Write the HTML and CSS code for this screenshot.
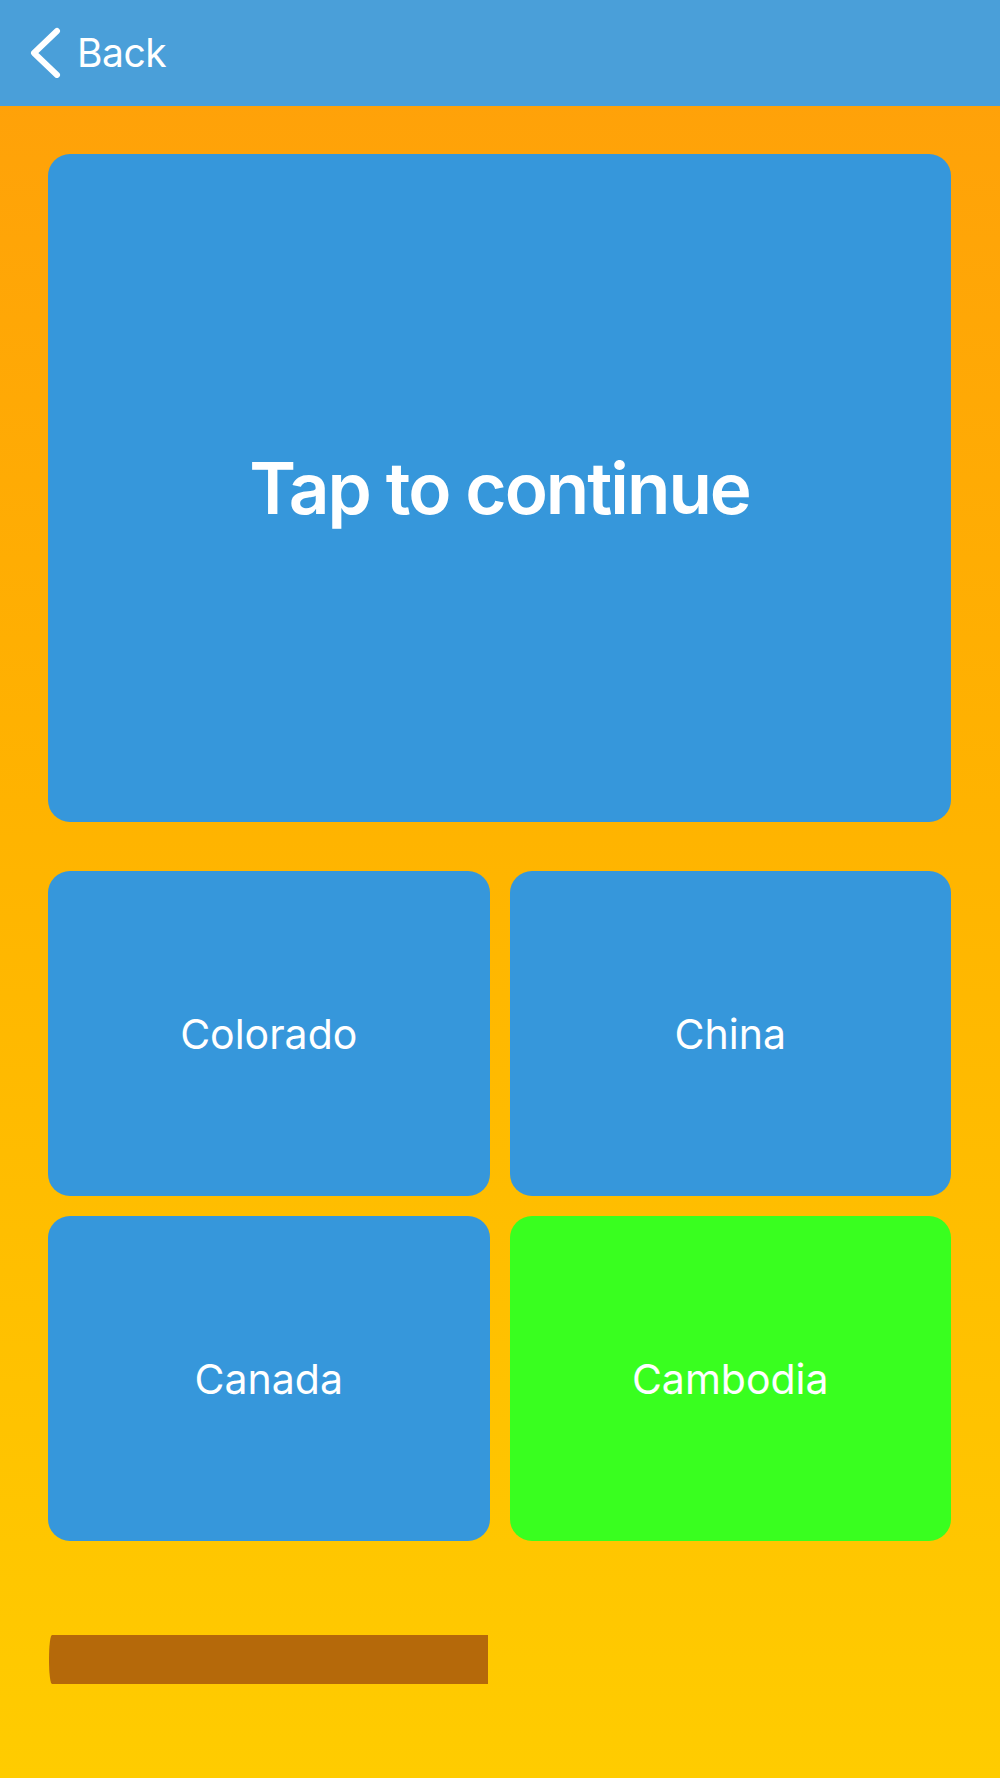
FILE: index.html
```html
<!DOCTYPE html>
<html lang="en">
  <head>
    <meta charset="UTF-8" />
    <meta name="viewport" content="width=device-width, initial-scale=1.0" />
    <title>Quiz</title>
    <link rel="stylesheet" href="styles.css">
  </head>
  <body>
    <div class="nav-bar">
      <a class="back-link" href="#">
        <svg class="back-icon" width="34" height="52" viewBox="0 0 34 52">
          <polyline points="27,5 4,27 27,49" fill="none" stroke="#fff" stroke-width="6" stroke-linecap="round" stroke-linejoin="round" />
        </svg>
        <span>Back</span>
      </a>
    </div>
    <div class="quiz">
      <div class="question-card">Tap to continue</div>
      <div class="answers">
        <div class="answer">Colorado</div>
        <div class="answer">China</div>
        <div class="answer">Canada</div>
        <div class="answer correct">Cambodia</div>
      </div>
      <div class="progress">
        <div class="progress-fill" style="width: 439px"></div>
      </div>
    </div>
  </body>
</html>
```

FILE: styles.css
```css
:root {
  --nav-color: #4a9fd9;
  --card-color: #3697db;
  --correct-color: #39ff1f;
  --bar-color: #b5690a;
}
body {
  margin: 0;
  padding: 0;
  font-family: Inter, "Noto Sans", sans-serif;
  min-height: 1778px;
  background: linear-gradient(180deg, #ff9f0a 0%, #ffb300 45%, #ffcc00 100%);
}
.nav-bar {
  height: 106px;
  background-color: var(--nav-color);
  display: flex;
  align-items: center;
  padding-left: 30px;
  box-sizing: border-box;
}
.back-link {
  display: flex;
  align-items: center;
  gap: 13px;
  color: #fff;
  text-decoration: none;
  font-size: 39px;
  letter-spacing: -0.5px;
  margin-top: -2px;
}
.quiz {
  padding: 48px 49px 0 48px;
}
.question-card {
  height: 668px;
  border-radius: 22px;
  background-color: var(--card-color);
  color: #fff;
  font-size: 71px;
  font-weight: 600;
  letter-spacing: -2px;
  display: flex;
  align-items: center;
  justify-content: center;
}
.answers {
  margin-top: 49px;
  display: grid;
  grid-template-columns: 1fr 1fr;
  grid-auto-rows: 325px;
  gap: 20px;
}
.answer {
  border-radius: 22px;
  background-color: var(--card-color);
  color: #fff;
  font-size: 41px;
  display: flex;
  align-items: center;
  justify-content: center;
}
.answer.correct {
  background-color: var(--correct-color);
}
.progress {
  margin-top: 94px;
  height: 49px;
  padding-left: 1px;
}
.progress-fill {
  height: 100%;
  background-color: var(--bar-color);
  border-radius: 3px 0 0 3px / 24px 0 0 24px;
}
```
